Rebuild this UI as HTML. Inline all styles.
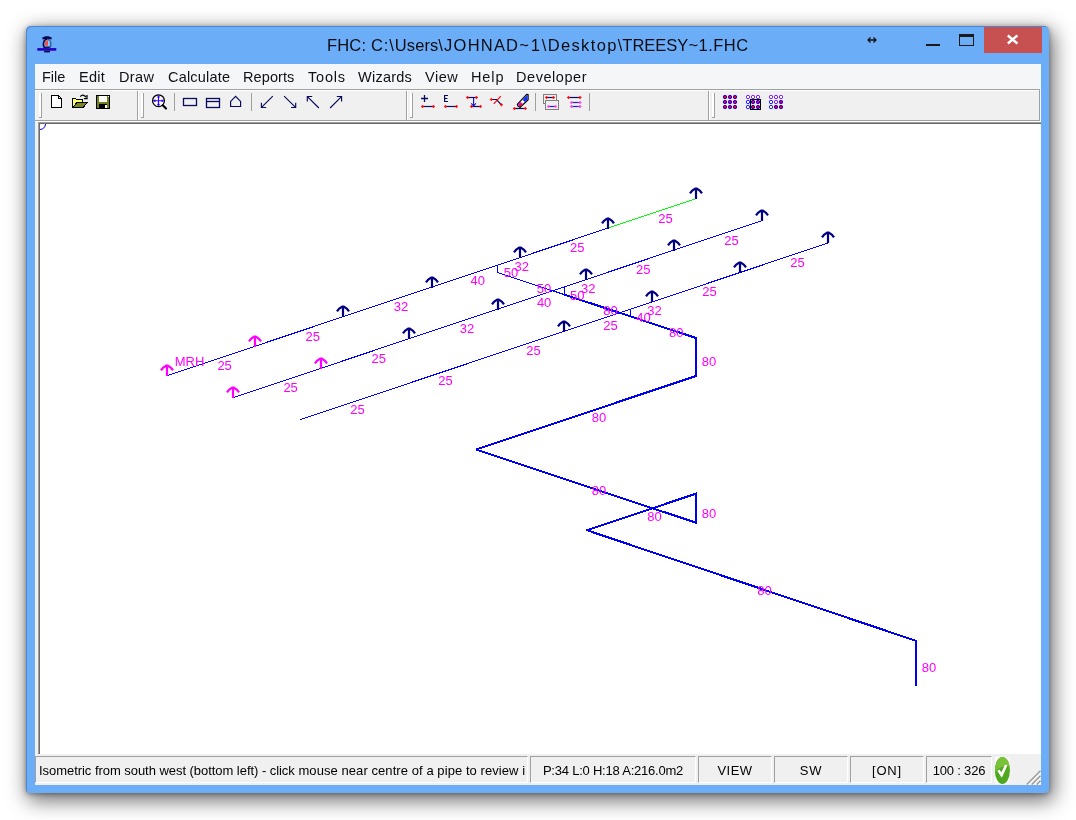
<!DOCTYPE html>
<html><head><meta charset="utf-8"><title>FHC</title>
<style>
html,body{margin:0;padding:0;}
body{width:1076px;height:820px;background:#fff;overflow:hidden;position:relative;font-family:"Liberation Sans",sans-serif;}
.abs{position:absolute;}
#title,.mi,.pn{will-change:transform;}
#win{position:absolute;left:26px;top:26px;width:1023px;height:767px;background:#6badf6;border-radius:5px 5px 4px 4px;box-shadow:1px 1px 0 0 rgba(60,110,180,.6) inset, 3px 6px 20px 2px rgba(0,0,0,.55), 0 1px 5px rgba(0,0,0,.36);}
#title{position:absolute;left:327.2px;top:34px;height:22px;font-size:16.5px;line-height:22px;color:#0c0c14;white-space:pre;}
#menubar{position:absolute;left:35px;top:64px;width:1006px;height:25px;background:#f5f6f7;}
.mi{position:absolute;top:67px;font-size:14.5px;line-height:20px;color:#101018;white-space:nowrap;}
#toolbar{position:absolute;left:35px;top:89px;width:1006px;height:33px;background:#f0f0f0;}
#form{position:absolute;left:35px;top:122px;width:1006px;height:632px;background:#f0f0f0;}
#canvas{position:absolute;left:40px;top:124px;width:1001px;height:630px;background:#fff;}
#status{position:absolute;left:35px;top:754px;width:1006px;height:31px;background:#f0f0f0;}
.pn{position:absolute;top:756px;height:27px;box-sizing:border-box;border-top:1px solid #a0a0a0;border-left:1px solid #a0a0a0;border-right:1px solid #fff;border-bottom:1px solid #fff;font-size:13px;line-height:16px;color:#000;white-space:nowrap;text-align:center;padding-top:6px;overflow:hidden;}
#close{position:absolute;left:984px;top:27px;width:58px;height:26px;background:#c75050;}
</style></head><body>
<div id="win"></div>
<div id="close"></div>
<div id="title"><span style="letter-spacing:0.164px">FHC: </span><span style="letter-spacing:0.939px">C:\</span><span style="letter-spacing:0.083px">Users</span><span style="letter-spacing:1.211px">\JOHNAD</span><span style="letter-spacing:1.844px">~1</span><span style="letter-spacing:1.361px">\Desktop</span><span style="letter-spacing:0.000px">\TREESY</span><span style="letter-spacing:0.5px">~1.FHC</span></div>
<div id="menubar"></div>
<div class="mi" style="left:41.7px;letter-spacing:0.00px">File</div>
<div class="mi" style="left:78.6px;letter-spacing:0.30px">Edit</div>
<div class="mi" style="left:118.9px;letter-spacing:0.40px">Draw</div>
<div class="mi" style="left:167.6px;letter-spacing:0.20px">Calculate</div>
<div class="mi" style="left:242.8px;letter-spacing:0.10px">Reports</div>
<div class="mi" style="left:307.7px;letter-spacing:0.80px">Tools</div>
<div class="mi" style="left:358.2px;letter-spacing:0.25px">Wizards</div>
<div class="mi" style="left:425.1px;letter-spacing:0.50px">View</div>
<div class="mi" style="left:471.0px;letter-spacing:0.90px">Help</div>
<div class="mi" style="left:516.2px;letter-spacing:0.55px">Developer</div>
<div id="toolbar"></div>
<div id="form"></div>
<div id="canvas"></div>
<div id="status"></div>
<div class="pn" style="left:35px;width:493px;text-align:left;padding-left:3px;"><span style="letter-spacing:-.045px">Isometric from south west (bottom left) - click</span><span style="letter-spacing:.07px"> mouse near centre of a pipe to review i</span></div>
<div class="pn" style="left:530px;width:166px;letter-spacing:-.22px">P:34 L:0 H:18 A:216.0m2</div>
<div class="pn" style="left:698px;width:74px;letter-spacing:.5px">VIEW</div>
<div class="pn" style="left:774px;width:74px;letter-spacing:.7px">SW</div>
<div class="pn" style="left:850px;width:74px;letter-spacing:.8px">[ON]</div>
<div class="pn" style="left:926px;width:66px;letter-spacing:-.2px">100 : 326</div>
<svg id="chrome" class="abs" style="left:0;top:0" width="1076" height="820" viewBox="0 0 1076 820">
<!-- title bar icon -->
<rect x="37.3" y="48.1" width="19" height="2.6" fill="#2200c4"/>
<rect x="44.2" y="50.7" width="5.8" height="1.7" fill="#060648"/>
<path d="M42.3 39.2V37.6Q44 37.2 45.2 36.2H48.8Q50 37.2 51.7 37.6V39.2Z" fill="#060650"/>
<path d="M47 39.3C42.6 39.6 42.6 46.6 45 47.9" fill="none" stroke="#060650" stroke-width="1.5"/>
<path d="M47 39.3C51.6 39.6 51.6 46.6 49 47.9" fill="none" stroke="#2f62a6" stroke-width="1.6"/>
<rect x="44.6" y="46.6" width="5" height="1.6" fill="#0a1858"/>
<rect x="45.2" y="40.6" width="2.9" height="5.2" fill="#e07820"/>
<rect x="45.2" y="41.2" width="2.9" height="4" fill="#ff4550"/>
<rect x="48.2" y="40.6" width="1.3" height="5.2" fill="#a8d0fa"/>
<!-- caption buttons -->
<g shape-rendering="crispEdges" fill="none">
<rect x="926" y="43.5" width="14" height="2.5" fill="#1a1a1a"/>
<rect x="959.5" y="35.5" width="14" height="10" stroke="#1a1a1a" stroke-width="1"/>
<rect x="959" y="34" width="15" height="3" fill="#1a1a1a"/>
</g>
<path d="M1007.8 35.5L1017.4 43.5M1017.4 35.5L1007.8 43.5" stroke="#fff" stroke-width="2.4" fill="none"/>
<!-- resize cursor -->
<path d="M868.5 40H875.5M870.5 37.5L868 40L870.5 42.5M873.5 37.5L876 40L873.5 42.5" stroke="#111" stroke-width="1.3" fill="none"/>
<!-- menu/toolbar borders -->
<g shape-rendering="crispEdges">
<rect x="35" y="89" width="1005" height="1" fill="#a0a0a0"/>
<rect x="35" y="90" width="1005" height="1" fill="#fff"/>
<rect x="35" y="90" width="1" height="30" fill="#fff"/>
<rect x="1039" y="89" width="1" height="32" fill="#a0a0a0"/>
<rect x="1040" y="89" width="1" height="33" fill="#fff"/>
<rect x="35" y="120" width="1005" height="1" fill="#a0a0a0"/>
<rect x="35" y="121" width="1006" height="1" fill="#fff"/>
<!-- canvas sunken border -->
<rect x="38" y="122" width="1003" height="1" fill="#a0a0a0"/>
<rect x="38" y="122" width="1" height="632" fill="#a0a0a0"/>
<rect x="39" y="123" width="1002" height="1" fill="#696969"/>
<rect x="39" y="123" width="1" height="631" fill="#696969"/>
</g>
<!-- toolbar grips and band separators -->
<g shape-rendering="crispEdges">
<rect x="39" y="93" width="2" height="24" fill="#fff"/><rect x="41" y="93" width="1" height="25" fill="#a0a0a0"/><rect x="39" y="117" width="2" height="1" fill="#a0a0a0"/>
<rect x="137" y="91" width="1" height="29" fill="#a0a0a0"/><rect x="138" y="91" width="1" height="29" fill="#fff"/>
<rect x="141" y="93" width="2" height="24" fill="#fff"/><rect x="143" y="93" width="1" height="25" fill="#a0a0a0"/><rect x="141" y="117" width="2" height="1" fill="#a0a0a0"/>
<rect x="406" y="91" width="1" height="29" fill="#a0a0a0"/><rect x="407" y="91" width="1" height="29" fill="#fff"/>
<rect x="410" y="93" width="2" height="24" fill="#fff"/><rect x="412" y="93" width="1" height="25" fill="#a0a0a0"/><rect x="410" y="117" width="2" height="1" fill="#a0a0a0"/>
<rect x="708" y="91" width="1" height="29" fill="#a0a0a0"/><rect x="709" y="91" width="1" height="29" fill="#fff"/>
<rect x="712" y="93" width="2" height="24" fill="#fff"/><rect x="714" y="93" width="1" height="25" fill="#a0a0a0"/><rect x="712" y="117" width="2" height="1" fill="#a0a0a0"/>
<!-- button separators -->
<rect x="174" y="93" width="1" height="18" fill="#a0a0a0"/>
<rect x="251" y="93" width="1" height="18" fill="#a0a0a0"/>
<rect x="535" y="93" width="1" height="18" fill="#a0a0a0"/>
<rect x="589" y="93" width="1" height="18" fill="#a0a0a0"/>
</g>
<!-- new / open / save -->
<g shape-rendering="crispEdges">
<path d="M51.5 95.5H58.5L61.5 98.5V107.5H51.5Z" fill="#fff" stroke="#000" stroke-width="1"/>
<path d="M58.5 95.5V98.5H61.5" fill="none" stroke="#000" stroke-width="1"/>
<!-- open folder -->
<path d="M72.5 107.5V98.5H75.5L76.5 99.5H82.5V102.5H77L72.5 107.5Z" fill="#ffff70" stroke="#000" stroke-width="1"/>
<path d="M72.5 107.5L77 102.5H87.5L83 107.5Z" fill="#7a8420" stroke="#000" stroke-width="1"/>

<!-- save -->
<rect x="96.5" y="95.5" width="13" height="13" fill="#74801c" stroke="#000" stroke-width="1"/>
<rect x="99" y="96" width="8" height="6" fill="#fff"/>
<rect x="108" y="96" width="1" height="1" fill="#fff"/>
<rect x="99" y="104" width="8" height="4" fill="#000"/>
<rect x="105" y="105" width="2" height="3" fill="#fff"/>
</g>
<path d="M80.3 96.7Q82.6 93.6 85.9 97M87 95V98.7H83.9" fill="none" stroke="#000" stroke-width="1.25"/>
<!-- zoom icon -->
<circle cx="158.5" cy="100.7" r="5.9" fill="#fff" stroke="#000" stroke-width="1.3"/>
<path d="M162.8 105.3L166 108.5" stroke="#000" stroke-width="2.2" stroke-linecap="round"/>
<path d="M153.6 100.7H163.4M158.5 95.6V105.8" stroke="#3000ff" stroke-width="1.15" fill="none"/>
<path d="M155.2 99.5L153.4 100.7L155.2 101.9ZM161.8 99.5L163.6 100.7L161.8 101.9ZM157.3 97.3L158.5 95.4L159.7 97.3ZM157.3 104.1L158.5 106L159.7 104.1Z" fill="#3000ff" stroke="#3000ff" stroke-width=".4"/>
<!-- rect / rect-line / house -->
<g fill="none" stroke="#0a0a5e" stroke-width="1.3">
<rect x="183.5" y="98.5" width="13" height="7"/>
<rect x="206.5" y="98.5" width="13" height="9"/>
<path d="M206.5 101.5H219.5"/>
</g>
<path d="M230.6 106.5V101.4L235.6 96.4L240.6 101.4V106.5Z" fill="none" stroke="#0a0a5e" stroke-width="1.2"/>
<!-- arrows -->
<g fill="none" stroke="#0a0a5e" stroke-width="1.15">
<path d="M272.8 96.1L261.5 107.4M261.4 102.8V107.5H266.2"/>
<path d="M284.1 96.1L295.6 107.4M295.7 102.8V107.5H291"/>
<path d="M318.9 108L307.4 96.6M307.3 101.4V96.5H312.2"/>
<path d="M330.1 108L341.5 96.6M341.6 101.4V96.5H336.8"/>
</g>
<!-- status icon + size grip -->
<rect x="995" y="757" width="15" height="27" fill="#f8f8f8"/>
<ellipse cx="1002.4" cy="770.4" rx="7.5" ry="13.5" fill="#4fa81d"/>
<path d="M995.2 772A7.5 13.5 0 0 1 1002.4 756.9A7.5 13.5 0 0 1 1009.6 766.5C1005 765 999 767 995.2 772Z" fill="#79c23a"/>
<path d="M998.4 770.2L1001.6 775L1006.2 765" fill="none" stroke="#fff" stroke-width="2.6" stroke-linejoin="miter"/>
<g fill="none">
<path d="M1028.2 784.5L1040.5 772.2M1033.2 784.5L1040.5 777.2M1038.2 784.5L1040.5 782.2" stroke="#fff" stroke-width="1.2"/>
<path d="M1026.8 784.5L1040.5 770.8M1031.8 784.5L1040.5 775.8M1036.8 784.5L1040.5 780.8" stroke="#9a9a9a" stroke-width="1.5"/>
</g>
<!-- pipe tool icons -->
<path d="M421 98.5H428M424.5 95V102" stroke="#0a0a5e" stroke-width="1.3" fill="none"/>
<path d="M422.5 106.5H433.5" stroke="#0a0a5e" stroke-width="1.2" fill="none"/>
<path d="M420.95 106.5L422.05 106.05L422.5 104.95L422.95 106.05L424.05 106.5L422.95 106.95L422.5 108.05L422.05 106.95Z" fill="#ff0000" stroke="#ff0000" stroke-width=".5"/>
<path d="M431.95 106.5L433.05 106.05L433.5 104.95L433.95 106.05L435.05 106.5L433.95 106.95L433.5 108.05L433.05 106.95Z" fill="#ff0000" stroke="#ff0000" stroke-width=".5"/>
<path d="M448 95.5H444.6V101.5H448M444.6 98.5H447.4" stroke="#0a0a5e" stroke-width="1.2" fill="none"/>
<path d="M445.5 106.5H456.5" stroke="#0a0a5e" stroke-width="1.2" fill="none"/>
<path d="M443.95 106.5L445.05 106.05L445.5 104.95L445.95 106.05L447.05 106.5L445.95 106.95L445.5 108.05L445.05 106.95Z" fill="#ff0000" stroke="#ff0000" stroke-width=".5"/>
<path d="M454.95 106.5L456.05 106.05L456.5 104.95L456.95 106.05L458.05 106.5L456.95 106.95L456.5 108.05L456.05 106.95Z" fill="#ff0000" stroke="#ff0000" stroke-width=".5"/>
<path d="M467.5 97.5H476.5" stroke="#0a0a5e" stroke-width="1.2" fill="none"/>
<path d="M471.5 106.5H480.5" stroke="#0a0a5e" stroke-width="1.2" fill="none"/>
<path d="M473.6 97.5V106M471.3 103.3L473.6 106L475.9 103.3" stroke="#1010d0" stroke-width="1.1" fill="none"/>
<path d="M465.95 97.5L467.05 97.05L467.5 95.95L467.95 97.05L469.05 97.5L467.95 97.95L467.5 99.05L467.05 97.95Z" fill="#ff0000" stroke="#ff0000" stroke-width=".5"/>
<path d="M474.95 97.5L476.05 97.05L476.5 95.95L476.95 97.05L478.05 97.5L476.95 97.95L476.5 99.05L476.05 97.95Z" fill="#ff0000" stroke="#ff0000" stroke-width=".5"/>
<path d="M469.95 106.5L471.05 106.05L471.5 104.95L471.95 106.05L473.05 106.5L471.95 106.95L471.5 108.05L471.05 106.95Z" fill="#ff0000" stroke="#ff0000" stroke-width=".5"/>
<path d="M478.95 106.5L480.05 106.05L480.5 104.95L480.95 106.05L482.05 106.5L480.95 106.95L480.5 108.05L480.05 106.95Z" fill="#ff0000" stroke="#ff0000" stroke-width=".5"/>
<path d="M491.3 99.5H496.5L501.4 104.8" stroke="#0a0a5e" stroke-width="1.2" fill="none"/>
<path d="M500.8 96.1L493.7 103.8" stroke="#ff0000" stroke-width="1.1" fill="none"/>
<path d="M489.75 99.5L490.85 99.05L491.3 97.95L491.75 99.05L492.85 99.5L491.75 99.95L491.3 101.05L490.85 99.95Z" fill="#ff0000" stroke="#ff0000" stroke-width=".5"/>
<path d="M499.85 104.8L500.95 104.35L501.4 103.25L501.85 104.35L502.95 104.8L501.85 105.25L501.4 106.35L500.95 105.25Z" fill="#ff0000" stroke="#ff0000" stroke-width=".5"/>
<path d="M517.3 104.3L526.7 94.3L528.1 94.6V99.8L520.6 106.9L518.3 106.5Z" fill="#fff" stroke="#000" stroke-width="1.2" stroke-linejoin="round"/>
<path d="M526.9 95.3L527.5 95.4V99.5L525 101.9L522.6 99.9Z" fill="#1030ff"/>
<path d="M520.6 102L523 104L520.4 106.2L518.6 105.9L518 104.6Z" fill="#e010c0"/>
<path d="M520.8 103.6L522.4 104.6L520.3 106.1L519.4 105.6Z" fill="#f01010"/>
<path d="M514.4 108.5H525.4" stroke="#0a0a5e" stroke-width="1.2" fill="none"/>
<path d="M512.85 108.5L513.95 108.05L514.4 106.95L514.85 108.05L515.95 108.5L514.85 108.95L514.4 110.05L513.95 108.95Z" fill="#ff0000" stroke="#ff0000" stroke-width=".5"/>
<path d="M523.85 108.5L524.95 108.05L525.4 106.95L525.85 108.05L526.95 108.5L525.85 108.95L525.4 110.05L524.95 108.95Z" fill="#ff0000" stroke="#ff0000" stroke-width=".5"/>
<path d="M520 107V108.5" stroke="#000" stroke-width="1.4"/>
<rect x="543.5" y="94.5" width="13" height="9" fill="none" stroke="#808080" stroke-width="1" shape-rendering="crispEdges"/>
<path d="M546.5 97.5H553.5" stroke="#0a0a5e" stroke-width="1.2" fill="none"/>
<path d="M544.95 97.5L546.05 97.05L546.5 95.95L546.95 97.05L548.05 97.5L546.95 97.95L546.5 99.05L546.05 97.95Z" fill="#ff0000" stroke="#ff0000" stroke-width=".5"/>
<path d="M551.95 97.5L553.05 97.05L553.5 95.95L553.95 97.05L555.05 97.5L553.95 97.95L553.5 99.05L553.05 97.95Z" fill="#ff0000" stroke="#ff0000" stroke-width=".5"/>
<rect x="545.5" y="100.5" width="13" height="9" fill="#f0f0f0" stroke="#808080" stroke-width="1" shape-rendering="crispEdges"/>
<path d="M548.5 106.5H555.5" stroke="#2020e0" stroke-width="1.2" fill="none"/>
<path d="M546.95 106.5L548.05 106.05L548.5 104.95L548.95 106.05L550.05 106.5L548.95 106.95L548.5 108.05L548.05 106.95Z" fill="#ff40e0" stroke="#ff40e0" stroke-width=".5"/>
<path d="M553.95 106.5L555.05 106.05L555.5 104.95L555.95 106.05L557.05 106.5L555.95 106.95L555.5 108.05L555.05 106.95Z" fill="#ff40e0" stroke="#ff40e0" stroke-width=".5"/>
<path d="M568.5 97.5H580" stroke="#0a0a5e" stroke-width="1.2" fill="none"/>
<path d="M566.95 97.5L568.05 97.05L568.5 95.95L568.95 97.05L570.05 97.5L568.95 97.95L568.5 99.05L568.05 97.95Z" fill="#ff0000" stroke="#ff0000" stroke-width=".5"/>
<path d="M578.45 97.5L579.55 97.05L580 95.95L580.45 97.05L581.55 97.5L580.45 97.95L580 99.05L579.55 97.95Z" fill="#ff0000" stroke="#ff0000" stroke-width=".5"/>
<path d="M571.5 102.5H580" stroke="#2020e0" stroke-width="1.2" fill="none"/>
<path d="M569.95 102.5L571.05 102.05L571.5 100.95L571.95 102.05L573.05 102.5L571.95 102.95L571.5 104.05L571.05 102.95Z" fill="#ff40e0" stroke="#ff40e0" stroke-width=".5"/>
<path d="M578.45 102.5L579.55 102.05L580 100.95L580.45 102.05L581.55 102.5L580.45 102.95L580 104.05L579.55 102.95Z" fill="#ff40e0" stroke="#ff40e0" stroke-width=".5"/>
<path d="M571.5 106.5H580" stroke="#2020e0" stroke-width="1.2" fill="none"/>
<path d="M569.95 106.5L571.05 106.05L571.5 104.95L571.95 106.05L573.05 106.5L571.95 106.95L571.5 108.05L571.05 106.95Z" fill="#ff40e0" stroke="#ff40e0" stroke-width=".5"/>
<path d="M578.45 106.5L579.55 106.05L580 104.95L580.45 106.05L581.55 106.5L580.45 106.95L580 108.05L579.55 106.95Z" fill="#ff40e0" stroke="#ff40e0" stroke-width=".5"/>
<!-- dot grid icons -->
<circle cx="725" cy="97" r="1.7" fill="#e00030" stroke="#2000e0" stroke-width="1"/>
<circle cx="730" cy="97" r="1.7" fill="#e00030" stroke="#2000e0" stroke-width="1"/>
<circle cx="735" cy="97" r="1.7" fill="#e00030" stroke="#2000e0" stroke-width="1"/>
<circle cx="725" cy="102" r="1.7" fill="#e00030" stroke="#2000e0" stroke-width="1"/>
<circle cx="730" cy="102" r="1.7" fill="#e00030" stroke="#2000e0" stroke-width="1"/>
<circle cx="735" cy="102" r="1.7" fill="#e00030" stroke="#2000e0" stroke-width="1"/>
<circle cx="725" cy="107" r="1.7" fill="#e00030" stroke="#2000e0" stroke-width="1"/>
<circle cx="730" cy="107" r="1.7" fill="#e00030" stroke="#2000e0" stroke-width="1"/>
<circle cx="735" cy="107" r="1.7" fill="#e00030" stroke="#2000e0" stroke-width="1"/>
<circle cx="748" cy="97" r="1.7" fill="#fafafa" stroke="#8020f0" stroke-width="1"/>
<circle cx="753" cy="97" r="1.7" fill="#fafafa" stroke="#8020f0" stroke-width="1"/>
<circle cx="758" cy="97" r="1.7" fill="#fafafa" stroke="#8020f0" stroke-width="1"/>
<circle cx="748" cy="102" r="1.7" fill="#fafafa" stroke="#2020ff" stroke-width="1"/>
<circle cx="753" cy="102" r="1.7" fill="#e00030" stroke="#2000e0" stroke-width="1"/>
<circle cx="758" cy="102" r="1.7" fill="#e00030" stroke="#2000e0" stroke-width="1"/>
<circle cx="748" cy="107" r="1.7" fill="#fafafa" stroke="#2020ff" stroke-width="1"/>
<circle cx="753" cy="107" r="1.7" fill="#e00030" stroke="#2000e0" stroke-width="1"/>
<circle cx="758" cy="107" r="1.7" fill="#e00030" stroke="#2000e0" stroke-width="1"/>
<circle cx="771" cy="97" r="1.7" fill="#fafafa" stroke="#8020f0" stroke-width="1"/>
<circle cx="776" cy="97" r="1.7" fill="#fafafa" stroke="#8020f0" stroke-width="1"/>
<circle cx="781" cy="97" r="1.7" fill="#fafafa" stroke="#8020f0" stroke-width="1"/>
<circle cx="771" cy="102" r="1.7" fill="#fafafa" stroke="#2020ff" stroke-width="1"/>
<circle cx="776" cy="102" r="1.7" fill="#fafafa" stroke="#8020f0" stroke-width="1"/>
<circle cx="781" cy="102" r="1.7" fill="#e00030" stroke="#2000e0" stroke-width="1"/>
<circle cx="771" cy="107" r="1.7" fill="#fafafa" stroke="#2020ff" stroke-width="1"/>
<circle cx="776" cy="107" r="1.7" fill="#e00030" stroke="#2000e0" stroke-width="1"/>
<circle cx="781" cy="107" r="1.7" fill="#e00030" stroke="#2000e0" stroke-width="1"/>
<rect x="750.5" y="99.5" width="10" height="10" fill="none" stroke="#000" stroke-width="1" shape-rendering="crispEdges"/>

</svg>
<svg id="dwg" class="abs" style="left:0;top:0" width="1076" height="820" viewBox="0 0 1076 820">
<g shape-rendering="crispEdges" fill="none" stroke-width="1">
<line x1="167.5" y1="375.5" x2="608.3" y2="228" stroke="#0000ff"/>
<line x1="608.3" y1="228" x2="696.5" y2="198.5" stroke="#00ff00"/>
<line x1="497.5" y1="265.1" x2="497.5" y2="272.5" stroke="#0000ff"/>
<line x1="233.5" y1="397.5" x2="762.5" y2="220.5" stroke="#0000ff"/>
<line x1="564.3" y1="286.8" x2="564.3" y2="294.6" stroke="#0000ff"/>
<line x1="300.5" y1="419.5" x2="828.5" y2="242.9" stroke="#0000ff"/>
<line x1="630.5" y1="309.1" x2="630.5" y2="316.4" stroke="#0000ff"/>
<line x1="497.5" y1="272.5" x2="564.3" y2="294.6" stroke="#0000ff"/>
<polyline stroke="#0000f0" stroke-width="2" stroke-linejoin="miter" stroke-miterlimit="2" points="564.3,294.6 630.5,316.4 696,338 696,376 476,449.5 696,522.7 696,493.7 586.8,530.2 916,640.8 916,685.5"/>
</g>
<g fill="none" stroke-width="2.2" stroke-linecap="square" stroke-linejoin="round">
<path stroke="#ff00ff" d="M167 376V365.5" stroke-linecap="butt"/>
<path stroke="#ff00ff" stroke-linecap="butt" d="M161 370.3Q162.8 367.4 166 365.7H168Q171.2 367.4 173 370.3"/>
<path stroke="#ff00ff" d="M255 347V336.5" stroke-linecap="butt"/>
<path stroke="#ff00ff" stroke-linecap="butt" d="M249 341.3Q250.8 338.4 254 336.7H256Q259.2 338.4 261 341.3"/>
<path stroke="#000080" d="M343 317V306.5" stroke-linecap="butt"/>
<path stroke="#000080" stroke-linecap="butt" d="M337 311.3Q338.8 308.4 342 306.7H344Q347.2 308.4 349 311.3"/>
<path stroke="#000080" d="M432 288V277.5" stroke-linecap="butt"/>
<path stroke="#000080" stroke-linecap="butt" d="M426 282.3Q427.8 279.4 431 277.7H433Q436.2 279.4 438 282.3"/>
<path stroke="#000080" d="M520 258V247.5" stroke-linecap="butt"/>
<path stroke="#000080" stroke-linecap="butt" d="M514 252.3Q515.8 249.4 519 247.7H521Q524.2 249.4 526 252.3"/>
<path stroke="#000080" d="M608 229V218.5" stroke-linecap="butt"/>
<path stroke="#000080" stroke-linecap="butt" d="M602 223.3Q603.8 220.4 607 218.7H609Q612.2 220.4 614 223.3"/>
<path stroke="#000080" d="M696 199V188.5" stroke-linecap="butt"/>
<path stroke="#000080" stroke-linecap="butt" d="M690 193.3Q691.8 190.4 695 188.7H697Q700.2 190.4 702 193.3"/>
<path stroke="#ff00ff" d="M233 398V387.5" stroke-linecap="butt"/>
<path stroke="#ff00ff" stroke-linecap="butt" d="M227 392.3Q228.8 389.4 232 387.7H234Q237.2 389.4 239 392.3"/>
<path stroke="#ff00ff" d="M321 369V358.5" stroke-linecap="butt"/>
<path stroke="#ff00ff" stroke-linecap="butt" d="M315 363.3Q316.8 360.4 320 358.7H322Q325.2 360.4 327 363.3"/>
<path stroke="#000080" d="M409 339V328.5" stroke-linecap="butt"/>
<path stroke="#000080" stroke-linecap="butt" d="M403 333.3Q404.8 330.4 408 328.7H410Q413.2 330.4 415 333.3"/>
<path stroke="#000080" d="M498 310V299.5" stroke-linecap="butt"/>
<path stroke="#000080" stroke-linecap="butt" d="M492 304.3Q493.8 301.4 497 299.7H499Q502.2 301.4 504 304.3"/>
<path stroke="#000080" d="M586 280V269.5" stroke-linecap="butt"/>
<path stroke="#000080" stroke-linecap="butt" d="M580 274.3Q581.8 271.4 585 269.7H587Q590.2 271.4 592 274.3"/>
<path stroke="#000080" d="M674 251V240.5" stroke-linecap="butt"/>
<path stroke="#000080" stroke-linecap="butt" d="M668 245.3Q669.8 242.4 673 240.7H675Q678.2 242.4 680 245.3"/>
<path stroke="#000080" d="M762 221V210.5" stroke-linecap="butt"/>
<path stroke="#000080" stroke-linecap="butt" d="M756 215.3Q757.8 212.4 761 210.7H763Q766.2 212.4 768 215.3"/>
<path stroke="#000080" d="M564 332V321.5" stroke-linecap="butt"/>
<path stroke="#000080" stroke-linecap="butt" d="M558 326.3Q559.8 323.4 563 321.7H565Q568.2 323.4 570 326.3"/>
<path stroke="#000080" d="M652 302V291.5" stroke-linecap="butt"/>
<path stroke="#000080" stroke-linecap="butt" d="M646 296.3Q647.8 293.4 651 291.7H653Q656.2 293.4 658 296.3"/>
<path stroke="#000080" d="M740 273V262.5" stroke-linecap="butt"/>
<path stroke="#000080" stroke-linecap="butt" d="M734 267.3Q735.8 264.4 739 262.7H741Q744.2 264.4 746 267.3"/>
<path stroke="#000080" d="M828 243V232.5" stroke-linecap="butt"/>
<path stroke="#000080" stroke-linecap="butt" d="M822 237.3Q823.8 234.4 827 232.7H829Q832.2 234.4 834 237.3"/>
</g>
<g font-family="'Liberation Sans',sans-serif" font-size="13" fill="#ff00ff">
<text x="217.4" y="370.1">25</text>
<text x="305.6" y="340.6">25</text>
<text x="393.7" y="311.1">32</text>
<text x="470.6" y="285.3">40</text>
<text x="514.6" y="270.6">32</text>
<text x="570" y="252.1">25</text>
<text x="658.2" y="222.6">25</text>
<text x="503.8" y="276.8">50</text>
<text x="283.4" y="392.1">25</text>
<text x="371.6" y="362.6">25</text>
<text x="459.7" y="333.1">32</text>
<text x="536.9" y="307.2">40</text>
<text x="581" y="292.5">32</text>
<text x="636" y="274.1">25</text>
<text x="724.2" y="244.6">25</text>
<text x="570.1" y="300">50</text>
<text x="350.3" y="414.1">25</text>
<text x="438.3" y="384.7">25</text>
<text x="526.3" y="355.2">25</text>
<text x="603.3" y="329.5">25</text>
<text x="647.3" y="314.7">32</text>
<text x="702.3" y="296.4">25</text>
<text x="790.3" y="266.9">25</text>
<text x="636.3" y="322.1">40</text>
<text x="536.7" y="292.9">50</text>
<text x="603.2" y="314.8">80</text>
<text x="669" y="336.5">80</text>
<text x="701.8" y="366.3">80</text>
<text x="591.8" y="422.1">80</text>
<text x="591.8" y="495.4">80</text>
<text x="701.8" y="517.5">80</text>
<text x="647.2" y="521.2">80</text>
<text x="757.2" y="594.8">80</text>
<text x="921.8" y="672.4">80</text>
<text x="174.7" y="366.3">MRH</text>
</g>
<path d="M45.5 124A5.5 5.5 0 0 1 40 129.5" fill="none" stroke="#0000ff" stroke-width="1"/>
</svg>
</body></html>
